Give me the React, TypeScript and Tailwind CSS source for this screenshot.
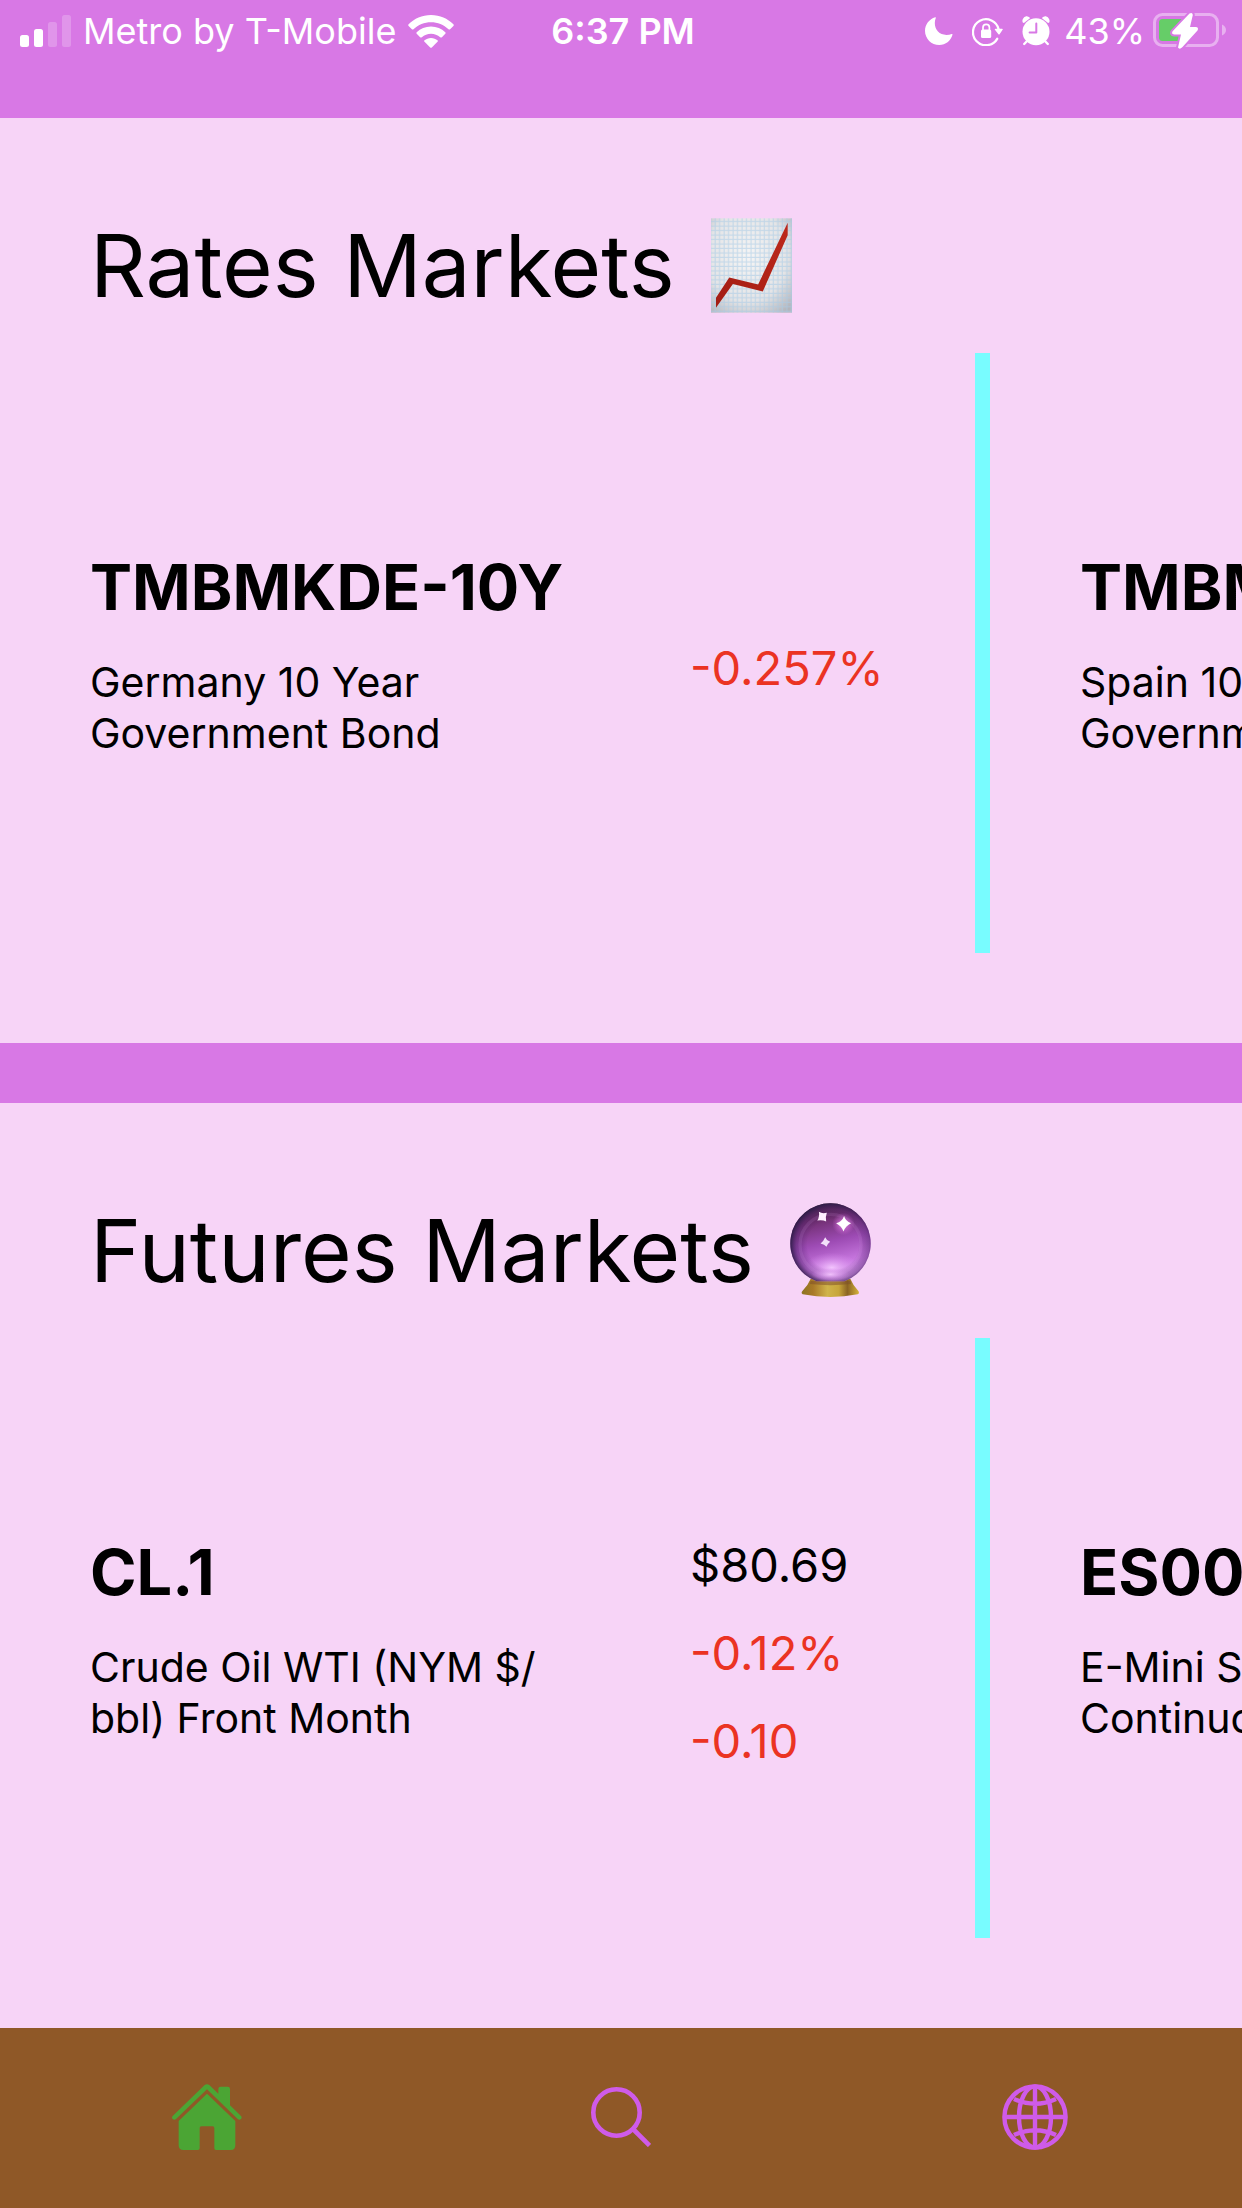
import type { ReactNode } from "react";

type Quote = { text: string; down?: boolean };
type Instrument = { symbol: string; name: string; quotes: Quote[] };

const rates: Instrument[] = [
  { symbol: "TMBMKDE-10Y", name: "Germany 10 Year Government Bond", quotes: [{ text: "-0.257%", down: true }] },
  { symbol: "TMBMKES-10Y", name: "Spain 10 Year Government Bond", quotes: [] },
];

const futures: Instrument[] = [
  {
    symbol: "CL.1",
    name: "Crude Oil WTI (NYM $/\u200bbbl) Front Month",
    quotes: [{ text: "$80.69" }, { text: "-0.12%", down: true }, { text: "-0.10", down: true }],
  },
  { symbol: "ES00", name: "E-Mini S&P 500 Future Continuous Contract", quotes: [] },
];

function Signal() {
  return (
    <svg width="51" height="32" viewBox="0 0 51 32" fill="white" aria-hidden="true">
      <rect x="0" y="20" width="9" height="12" rx="2.5" />
      <rect x="14" y="14" width="9" height="18" rx="2.5" />
      <rect x="28" y="7" width="9" height="25" rx="2.5" opacity=".22" />
      <rect x="42" y="0" width="9" height="32" rx="2.5" opacity=".22" />
    </svg>
  );
}

function Wifi() {
  return (
    <svg width="46" height="33" viewBox="0 0 46 33" fill="white" aria-hidden="true">
      <path d="M23 0C32 0 39.600 3.600 45.400 9.200Q46.200 10 45.400 10.900L42.100 14.200Q41.300 14.900 40.500 14.200C35.700 9.700 29.700 7.200 23 7.200S10.300 9.700 5.500 14.200Q4.700 14.900 3.900 14.200L.6 10.900Q-.2 10 .6 9.200C6.400 3.600 14 0 23 0Z" />
      <path d="M23 11.500C28.700 11.500 33.500 13.700 37.300 17.200Q38.100 18 37.300 18.800L33.900 22.200Q33.100 22.900 32.200 22.200C29.600 19.900 26.500 18.700 23 18.700S16.400 19.900 13.800 22.200Q12.900 22.900 12.100 22.200L8.700 18.800Q7.900 18 8.700 17.200C12.500 13.700 17.300 11.500 23 11.500Z" />
      <path d="M23 23C25.600 23 27.800 24 29.500 25.300Q30.200 26 29.500 26.800L23.800 32.500Q23 33.200 22.200 32.500L16.500 26.800Q15.800 26 16.500 25.300C18.200 24 20.400 23 23 23Z" />
    </svg>
  );
}

function Moon() {
  return (
    <svg width="28" height="28" viewBox="0 0 28 28" fill="white" aria-hidden="true">
      <path d="M10.200.2C10.700 0 11 .4 10.800.9C10.100 2.400 9.800 4.200 9.800 6.100C9.800 13 14.500 17.900 21.400 17.900C23.400 17.900 25.200 17.600 26.700 17C27.300 16.800 27.700 17.200 27.500 17.700C25.500 23.700 20.800 28 14.300 28C6.400 28 0 21.700 0 13.700C0 7.300 4.300 2.100 10.200.2Z" />
    </svg>
  );
}

function RotationLock() {
  return (
    <svg width="31" height="29" viewBox="0 0 31 29" fill="none" aria-hidden="true">
      <path d="M25.200 21.800A13 13 0 1 1 26.700 12.500" stroke="white" strokeWidth="2.300" strokeLinecap="round" />
      <path d="M23.500 11.800H30.200Q31.200 11.800 30.600 12.800L27.600 17.200Q27 18 26.400 17.200L22.900 12.800Q22.300 11.800 23.500 11.800Z" fill="white" />
      <rect x="9" y="12.500" width="10.200" height="8.500" rx="1.500" fill="white" />
      <path d="M11 13.500V10.500A3.200 3.200 0 0 1 17.400 10.500V13.500" stroke="white" strokeWidth="1.700" />
    </svg>
  );
}

function Alarm() {
  return (
    <svg width="28" height="30" viewBox="0 0 28 30" fill="none" aria-hidden="true">
      <path d="M.8 6.600C-.6 3.800 2.200 0 5.400.4C6.600.5 7.600 1.200 8 2.200L1.900 6.900Z" fill="white" />
      <path d="M27.200 6.600C28.600 3.800 25.800 0 22.600.4C21.400.5 20.400 1.200 20 2.200L26.100 6.900Z" fill="white" />
      <path d="M4.600 25.500L2.200 28M23.400 25.500L25.800 28" stroke="white" strokeWidth="2.400" strokeLinecap="round" />
      <circle cx="14" cy="15.700" r="13.500" fill="white" />
      <path d="M14.300 7.500V16.500H7.600" stroke="#d878e5" strokeWidth="2" strokeLinecap="round" strokeLinejoin="round" />
    </svg>
  );
}

function Battery() {
  return (
    <svg width="73" height="36" viewBox="0 0 73 36" aria-hidden="true">
      <rect x="1.500" y="1.500" width="63" height="31" rx="8" fill="none" stroke="white" strokeOpacity=".42" strokeWidth="3" />
      <path d="M69 11.500C71.500 12.500 73 14.500 73 17S71.500 21.500 69 22.500Z" fill="white" opacity=".42" />
      <path d="M9.500 6H29V28H9.500Q6 28 6 24.500V9.500Q6 6 9.500 6Z" fill="#66cd68" />
      <path d="M36.500.5L19.600 18.300Q18 21.200 21.200 21.600H28L25 34.500Q26.500 37 29.500 34L44.500 17.500Q46 14.500 43 14H37L39.800 2Q39.500-1 36.500.5Z" fill="white" stroke="#d878e5" strokeWidth="4" paintOrder="stroke" strokeLinejoin="round" />
    </svg>
  );
}

function ChartEmoji() {
  return (
    <svg width="81" height="95" viewBox="0 0 244 284" role="img" aria-label="Chart increasing">
      <defs>
        <radialGradient id="paper" cx=".45" cy=".4" r=".75">
          <stop offset="0" stopColor="#f6f5f5" />
          <stop offset=".65" stopColor="#e4e4e6" />
          <stop offset="1" stopColor="#b3b5bc" />
        </radialGradient>
        <pattern id="grid" width="13.500" height="13.500" patternUnits="userSpaceOnUse" x="1" y="-2">
          <path d="M0 11.500H13.500M11.500 0V13.500" stroke="#a9cbe6" strokeWidth="3.400" opacity=".6" />
        </pattern>
        <linearGradient id="trend" x1="0" y1="1" x2="1" y2="0">
          <stop offset="0" stopColor="#a31d14" />
          <stop offset="1" stopColor="#bd281b" />
        </linearGradient>
      </defs>
      <rect width="244" height="284" fill="url(#paper)" />
      <rect width="244" height="284" fill="url(#grid)" />
      <path d="M15 239L55 178L142 199L231 13V51L156 220L66 198L15 269Z" fill="url(#trend)" />
    </svg>
  );
}

function CrystalBallEmoji() {
  return (
    <svg width="81" height="95" viewBox="0 0 244 284" role="img" aria-label="Crystal ball">
      <defs>
        <linearGradient id="orb" x1=".35" y1="0" x2=".6" y2="1">
          <stop offset="0" stopColor="#47233f" />
          <stop offset=".2" stopColor="#702e70" />
          <stop offset=".5" stopColor="#9d4bb4" />
          <stop offset=".78" stopColor="#c777df" />
          <stop offset="1" stopColor="#d9a0ee" />
        </linearGradient>
        <radialGradient id="rim" cx=".53" cy=".53" r=".53">
          <stop offset=".6" stopColor="#3c1a5a" stopOpacity="0" />
          <stop offset=".85" stopColor="#4a2167" stopOpacity=".4" />
          <stop offset="1" stopColor="#2e1d48" stopOpacity=".95" />
        </radialGradient>
        <radialGradient id="glow" cx=".5" cy=".5" r=".5">
          <stop offset="0" stopColor="#f5c9ff" stopOpacity=".95" />
          <stop offset="1" stopColor="#d988ee" stopOpacity="0" />
        </radialGradient>
        <radialGradient id="spark" cx=".5" cy=".5" r=".5">
          <stop offset="0" stopColor="#ff9bff" stopOpacity=".8" />
          <stop offset="1" stopColor="#e070e6" stopOpacity="0" />
        </radialGradient>
        <linearGradient id="stand" x1="0" y1="0" x2="1" y2="0">
          <stop offset="0" stopColor="#8d7422" />
          <stop offset=".2" stopColor="#a97928" />
          <stop offset=".45" stopColor="#d0b44b" />
          <stop offset=".65" stopColor="#c7a53a" />
          <stop offset=".8" stopColor="#8b6423" />
          <stop offset="1" stopColor="#d5b33b" />
        </linearGradient>
      </defs>
      <path d="M62 228H182Q190 248 206 264Q210 271 204 274Q122 290 38 274Q32 270 38 263Q54 248 62 228Z" fill="url(#stand)" />
      <path d="M62 234H182L184 243Q122 250 60 243Z" fill="#7b4c28" opacity=".5" />
      <path d="M122 0A121 121 0 0 1 164 234.500H80A121 121 0 0 1 122 0Z" fill="url(#orb)" />
      <ellipse cx="126" cy="194" rx="84" ry="46" fill="url(#glow)" />
      <path d="M122 0A121 121 0 0 1 164 234.500H80A121 121 0 0 1 122 0Z" fill="url(#rim)" />
      <ellipse cx="122" cy="214" rx="58" ry="20" fill="url(#glow)" />
      <circle cx="122" cy="125" r="92" fill="none" stroke="#dda4f0" strokeWidth="10" opacity=".13" />
      <circle cx="161" cy="62" r="34" fill="url(#spark)" />
      <path d="M163 38Q167 54 184 60Q168 67 161 85Q156 69 139 60Q157 55 163 38Z" fill="white" />
      <path d="M87 25Q97 32 111 28Q106 40 109 55Q98 49 82 52Q90 40 87 25Z" fill="#fff0ff" />
      <path d="M106 102Q110 112 121 116Q114 121 110 131Q104 124 92 121Q101 114 106 102Z" fill="#f3e0fa" />
    </svg>
  );
}

function HomeIcon() {
  return (
    <svg width="70" height="66" viewBox="0 0 210 198" fill="#4ba534" aria-hidden="true">
      <path d="M98 3Q105-2 112 3L139 29V15Q139 8 146 8H167Q174 8 174 15V64L207 96Q211 101 207 105Q202 109 197 105L105 16L12 105Q7 109 2 105Q-2 101 2 96Z" />
      <path d="M105 29L190 111V184Q190 198 177 198H132Q127 198 127 193V132Q127 127 122 127H88Q83 127 83 132V193Q83 198 78 198H34Q20 198 20 184V111Z" />
    </svg>
  );
}

function SearchIcon() {
  return (
    <svg width="60" height="60" viewBox="0 0 60 60" fill="none" stroke="#cf5be9" aria-hidden="true">
      <circle cx="25.500" cy="25.500" r="23.200" strokeWidth="4.600" />
      <path d="M42 42L58.500 58.500" strokeWidth="4.600" />
    </svg>
  );
}

function GlobeIcon() {
  return (
    <svg width="66" height="66" viewBox="0 0 66 66" fill="none" stroke="#cf5be9" strokeWidth="4.400" aria-hidden="true">
      <circle cx="33" cy="33" r="30.600" />
      <ellipse cx="33" cy="33" rx="16" ry="30.600" />
      <path d="M33 2V64M2 33H64M12 15Q33 24.500 54 15M12 51Q33 41.500 54 51" />
    </svg>
  );
}

function StatusBar() {
  return (
    <header className="grid h-[118px] grid-cols-[1fr_auto_1fr] items-start bg-[#d878e5] pr-[16px] pl-[20px] text-[36px] leading-[62px] text-white">
      <div className="flex h-[62px] items-center gap-[12px] whitespace-nowrap">
        <Signal />
        <span>Metro by T-Mobile</span>
        <Wifi />
      </div>
      <time className="font-semibold">6:37 PM</time>
      <div className="flex h-[62px] items-center justify-end gap-[14px]">
        <div className="flex items-center gap-[19px]">
          <Moon />
          <RotationLock />
          <Alarm />
        </div>
        <div className="flex items-center gap-[8px]">
          <span>43%</span>
          <Battery />
        </div>
      </div>
    </header>
  );
}

function Card({ item }: { item: Instrument }) {
  return (
    <li className="flex h-[600px] w-[990px] shrink-0 items-center border-r-[15px] border-[#78fcff] pl-[90px]">
      <div className="mr-[150px] w-[450px] shrink-0">
        <h2 className="text-[63px] leading-[80px] font-bold whitespace-nowrap">{item.symbol}</h2>
        <p className="mt-[30px] text-[41px] leading-[51px]">{item.name}</p>
      </div>
      <div className="text-[47px] leading-[58px]">
        {item.quotes.map((q) => (
          <p key={q.text} className={q.down ? "mt-[30px] text-[#eb3323]" : "mt-[30px]"}>
            {q.text}
          </p>
        ))}
      </div>
    </li>
  );
}

function Market({ title, emoji, items }: { title: string; emoji: ReactNode; items: Instrument[] }) {
  return (
    <section className="bg-[#f7d4f7] py-[90px]">
      <div className="mb-[30px] flex items-center gap-[36px] px-[90px]">
        <h1 className="text-[87px] leading-[115px]">{title}</h1>
        {emoji}
      </div>
      <ul className="flex overflow-x-auto [scrollbar-width:none]">
        {items.map((item) => (
          <Card key={item.symbol} item={item} />
        ))}
      </ul>
    </section>
  );
}

export default function App() {
  return (
    <div className="flex min-h-screen flex-col bg-[#d878e5] font-['Inter',sans-serif] text-black">
      <StatusBar />
      <main className="flex grow flex-col gap-[60px]">
        <Market title="Rates Markets" emoji={<ChartEmoji />} items={rates} />
        <Market title="Futures Markets" emoji={<CrystalBallEmoji />} items={futures} />
      </main>
      <nav className="grid h-[180px] grid-cols-3 bg-[#8f5827] pb-[2px]">
        <button type="button" aria-label="Home" aria-current="page" className="flex items-center justify-center">
          <HomeIcon />
        </button>
        <button type="button" aria-label="Search" className="flex items-center justify-center">
          <SearchIcon />
        </button>
        <button type="button" aria-label="World" className="flex items-center justify-center">
          <GlobeIcon />
        </button>
      </nav>
    </div>
  );
}
